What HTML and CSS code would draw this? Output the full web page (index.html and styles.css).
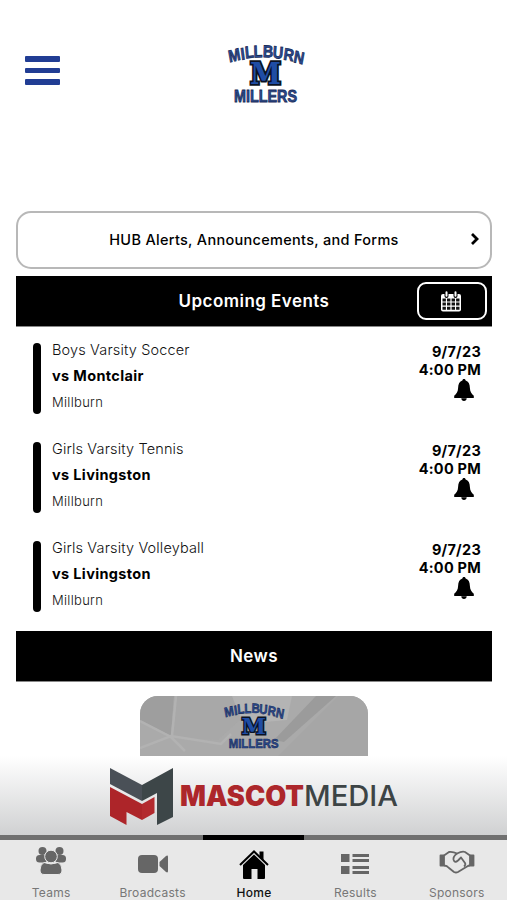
FILE: index.html
```html
<!DOCTYPE html>
<html lang="en">
<head>
  <meta charset="UTF-8">
  <title>Millburn Millers</title>
  <link rel="stylesheet" href="styles.css">
</head>
<body>

<header class="header">
  <button class="menu"><span></span><span></span><span></span></button>
  <svg class="logo" width="78" height="64" viewBox="0 0 78 64">
    <g id="logo">
      <text class="logo-word" transform="scale(.84 1)" x="9 18.500 26 36 47.500 59 71.500 83.500" y="20.500 18 16.500 15.500 15 15.700 17.500 20" rotate="-12 -9 -6 -2 2 5 9 12">MILLBURN</text>
      <text class="logo-m" x="22" y="42" textLength="31" lengthAdjust="spacingAndGlyphs">M</text>
      <text class="logo-word millers" x="37.500" y="60" textLength="63" lengthAdjust="spacingAndGlyphs">MILLERS</text>
    </g>
  </svg>
</header>

<main class="content">
  <a class="alerts">
    <span>HUB Alerts, Announcements, and Forms</span>
    <svg class="chevron" width="10" height="14" viewBox="0 0 10 14"><path d="M2 2l5 5-5 5" fill="none" stroke="#000" stroke-width="2.800"/></svg>
  </a>

  <div class="title-bar">
    <h2>Upcoming Events</h2>
    <button class="calendar">
      <svg width="20" height="21" viewBox="0 0 20 21">
        <path d="M2 3h16q2 0 2 2v13.500q0 2-2 2H2q-2 0-2-2V5q0-2 2-2z" fill="#fff"/>
        <path d="M5.500 1v4M14.500 1v4" stroke="#000" stroke-width="4" stroke-linecap="round"/>
        <path d="M5.500 1.300v3.400M14.500 1.300v3.400" stroke="#fff" stroke-width="2" stroke-linecap="round"/>
        <path d="M1.500 7.500h3.400v3H1.500zM6 7.500h3.400v3H6zM10.600 7.500H14v3h-3.400zM15.100 7.500h3.400v3h-3.400zM1.500 11.600h3.400v3H1.500zM6 11.600h3.400v3H6zM10.600 11.600H14v3h-3.400zM15.100 11.600h3.400v3h-3.400zM1.500 15.700h3.400v3H1.500zM6 15.700h3.400v3H6zM10.600 15.700H14v3h-3.400zM15.100 15.700h3.400v3h-3.400z" fill="#111"/>
      </svg>
    </button>
  </div>

  <div class="events">
    <div class="event">
      <div class="stripe"></div>
      <div class="info">
        <p class="sport">Boys Varsity Soccer</p>
        <p class="opponent">vs Montclair</p>
        <p class="place">Millburn</p>
      </div>
      <div class="when">
        <p>9/7/23</p>
        <p>4:00 PM</p>
        <svg class="bell" width="20" height="22" viewBox="0 0 20 22">
          <path id="bell" d="M10 0c1 0 1.600.7 1.600 1.600C14.500 2.400 15.800 5 15.900 9c.1 4 1.600 5.600 3.900 7.700V19H.2v-2.300C2.500 14.600 4 13 4.100 9 4.200 5 5.500 2.400 8.400 1.600 8.400.7 9 0 10 0zM7.300 19.300h5.400C12.600 21 11.600 22 10 22s-2.600-1-2.700-2.700z"/>
        </svg>
      </div>
    </div>
    <div class="event">
      <div class="stripe"></div>
      <div class="info">
        <p class="sport">Girls Varsity Tennis</p>
        <p class="opponent">vs Livingston</p>
        <p class="place">Millburn</p>
      </div>
      <div class="when">
        <p>9/7/23</p>
        <p>4:00 PM</p>
        <svg class="bell" width="20" height="22"><use href="#bell"/></svg>
      </div>
    </div>
    <div class="event">
      <div class="stripe"></div>
      <div class="info">
        <p class="sport">Girls Varsity Volleyball</p>
        <p class="opponent">vs Livingston</p>
        <p class="place">Millburn</p>
      </div>
      <div class="when">
        <p>9/7/23</p>
        <p>4:00 PM</p>
        <svg class="bell" width="20" height="22"><use href="#bell"/></svg>
      </div>
    </div>
  </div>

  <div class="title-bar">
    <h2>News</h2>
  </div>

  <div class="news-card">
    <svg width="228" height="60" viewBox="0 0 228 60">
      <rect width="228" height="60" fill="#aaa"/>
      <path d="M0 0h34l-3 40L0 24z" fill="#9e9e9e"/>
      <path d="M34 0h58l8 24-22 20-40-2-7-4z" fill="#a8a8a8"/>
      <path d="M92 0h60l-5 24-44 4z" fill="#b4b4b4"/>
      <path d="M176 0h20l-52 46-10-2z" fill="#9b9b9b"/>
      <path d="M228 0v60h-90l60-60z" fill="#a6a6a6"/>
      <path d="M0 25l31 16 14 14M0 52l31-12 50 8 10-10M32 40L36 0" fill="none" stroke="#b2b2b2" stroke-width="2.500"/>
      <g transform="translate(84 5) scale(.79)"><use href="#logo"/></g>
    </svg>
  </div>
</main>

<div class="sponsor">
  <svg width="290" height="62" viewBox="0 0 290 62">
    <path d="M1 3l32 17v16L1 19z" fill="#4a5057"/>
    <path d="M33 20L64 3v49l-16 8V28l-15 8z" fill="#3d4648"/>
    <path d="M1 22l32 17v16l-15.500-8v13L1 51z" fill="#ad2529"/>
    <path d="M33 39l12.500-7v16L33 55z" fill="#b32a2e"/>
    <text class="mascot" x="71" y="41" textLength="124" lengthAdjust="spacingAndGlyphs">MASCOT</text>
    <text class="media" x="195" y="41" textLength="94" lengthAdjust="spacingAndGlyphs">MEDIA</text>
  </svg>
</div>

<nav class="tabs">
  <a class="tab">
    <svg width="30" height="28" viewBox="0 0 30 28" fill="#666">
      <circle cx="6.500" cy="4" r="4"/><circle cx="23.500" cy="4" r="4"/>
      <rect x="0" y="8" width="11" height="7.500" rx="3.500"/><rect x="19" y="8" width="11" height="7.500" rx="3.500"/>
      <g stroke="#e8e8e8"><circle cx="15" cy="9.500" r="6.300"/><path d="M8 15.500q7 3 14 0 4 2 4 7.500 0 4.500-4 4.500H8q-4 0-4-4.500 0-5.500 4-7.500z"/></g>
    </svg>
    <span>Teams</span>
  </a>
  <a class="tab">
    <svg width="30" height="28" viewBox="0 0 30 28" fill="#666">
      <rect x="0" y="8" width="20" height="18" rx="4"/><path d="M21.500 15l6.500-6q2-1.300 2 1v14q0 2.300-2 1l-6.500-6z"/>
    </svg>
    <span>Broadcasts</span>
  </a>
  <a class="tab active">
    <svg width="30" height="32" viewBox="0 0 30 32">
      <path d="M1 18L15 4.500 29 18" fill="none" stroke="#000" stroke-width="2"/>
      <path d="M20.500 4.500h4v9l-4-4zM15 7.500L26 18v13q0 1-1 1h-6.500V22h-6v10H5q-1 0-1-1V18z"/>
    </svg>
    <span>Home</span>
  </a>
  <a class="tab">
    <svg width="28" height="28" viewBox="0 0 28 28" fill="#666">
      <path d="M0 7h8.500v8H0zM11.500 7H28v3H11.500zM11.500 12H28v3H11.500zM0 19h8.500v8H0zM11.500 19H28v3H11.500zM11.500 24H28v3H11.500z"/>
    </svg>
    <span>Results</span>
  </a>
  <a class="tab">
    <svg width="36" height="28" viewBox="0 0 36 28" fill="none" stroke="#666" stroke-width="1.800" stroke-linejoin="round">
      <path d="M1.500 8.500h3.500v10H1.500zM31 8.500h3.500v10H31z" fill="#666"/>
      <path d="M5 8.500l5-3.500q4-.5 8 1.500 5-2.500 8-1.500l5 3.500M5 18.500q3 0 5 2.500l5 4q2 1 4 0l9-5.500q1.500-1 3-1"/>
      <path d="M18 6.500q-4 3-3.500 6 1 4 4.500 1l3-3 4 5.500q1 2-1 3.500"/>
    </svg>
    <span>Sponsors</span>
  </a>
</nav>

</body>
</html>
```
FILE: styles.css
```css
* {
  box-sizing: border-box;
}

body {
  margin: 0;
  height: 900px;
  display: flex;
  flex-direction: column;
  font-family: Inter, 'Liberation Sans', sans-serif;
  background: #fff;
  color: #000;
  overflow: hidden;
}

p, h2 {
  margin: 0;
}

button {
  padding: 0;
  border: none;
  background: none;
}

svg {
  display: block;
  flex: none;
}

.header {
  height: 211px;
  flex: none;
  display: grid;
  grid-template-columns: 1fr 78px 1fr;
  align-items: start;
  padding: 42px 25px 0;
}

.menu {
  width: 35px;
  margin-top: 14px;
  display: flex;
  flex-direction: column;
  gap: 6px;
}

.menu span {
  height: 5.600px;
  width: 35px;
  border-radius: 1px;
  background: #213d94;
}

.header .logo {
  margin-left: 13px;
  overflow: visible;
}

.logo-word {
  font: 700 17px 'Liberation Sans', sans-serif;
  text-anchor: middle;
  fill: #294b96;
  stroke: #1b2b55;
  stroke-width: 0.800px;
}

.millers {
  font-size: 17px;
}

.logo-m {
  font: 700 29px 'DejaVu Serif', serif;
  fill: #1f4da5;
  stroke: #0a1224;
  stroke-width: 3.500px;
  paint-order: stroke;
}

.content {
  height: 545px;
  flex: none;
  padding: 0 15px 0 16px;
  overflow: hidden;
}

.alerts {
  height: 58px;
  margin-bottom: 7px;
  padding-bottom: 2px;
  display: grid;
  grid-template-columns: 24px 1fr 24px;
  align-items: center;
  border: 2px solid #b8b8b8;
  border-radius: 15px;
  font-size: 14.500px;
  font-weight: 500;
  letter-spacing: 0.300px;
}

.alerts span {
  grid-column: 2;
  text-align: center;
  white-space: nowrap;
}

.alerts .chevron {
  margin-left: 4px;
}

.title-bar {
  height: 51px;
  display: grid;
  grid-template-columns: 75px 1fr 75px;
  align-items: center;
  background: #000;
  border-bottom: 1px solid #888;
}

.title-bar h2 {
  grid-column: 2;
  text-align: center;
  color: #fff;
  font-size: 17px;
  font-weight: 600;
  letter-spacing: 0.450px;
}

.calendar {
  width: 70px;
  height: 38px;
  display: flex;
  align-items: center;
  justify-content: center;
  padding-right: 2px;
  border: 2px solid #fff;
  border-radius: 9px;
}

.events {
  height: 304px;
  padding: 16px 11px 0 17px;
}

.event {
  height: 99px;
  display: flex;
}

.stripe {
  width: 7.500px;
  height: 71px;
  border-radius: 4px;
  background: #000;
}

.info {
  flex: 1;
  margin: -6px 0 0 11.500px;
  line-height: 26px;
  font-size: 14.500px;
}

.sport {
  font-weight: 300;
  letter-spacing: 0.150px;
  color: #111;
}

.opponent {
  font-size: 14.500px;
  font-weight: 700;
  letter-spacing: 0.350px;
}

.place {
  font-size: 13px;
  font-weight: 300;
  letter-spacing: 0.300px;
  color: #111;
}

.when {
  display: flex;
  flex-direction: column;
  align-items: flex-end;
  line-height: 18px;
  font-size: 14.500px;
  font-weight: 700;
  letter-spacing: 0.250px;
}

.bell {
  margin-right: 7px;
}

.news-card {
  width: 228px;
  margin: 14px 0 0 124px;
  border-radius: 18px 18px 0 0;
  overflow: hidden;
}

.sponsor {
  height: 79px;
  flex: none;
  padding: 9px 0 0 109px;
  background: linear-gradient(#fff, #d0d1d2);
}

.mascot {
  font: 900 28px Inter, sans-serif;
  fill: #ad272b;
}

.media {
  font: 500 28px Inter, sans-serif;
  fill: #3d4445;
}

.tabs {
  height: 65px;
  flex: none;
  display: grid;
  grid-template-columns: repeat(5, 1fr);
  background: #e8e8e8;
}

.tab {
  display: flex;
  flex-direction: column;
  align-items: center;
  justify-content: space-between;
  padding: 7px 0 0 1px;
  border-top: 5px solid #707070;
  color: #777;
  font-size: 12px;
  letter-spacing: 0.250px;
}

.tab span {
  line-height: 15px;
}

.tab.active {
  border-top-color: #000;
  color: #111;
  font-weight: 500;
}
```
